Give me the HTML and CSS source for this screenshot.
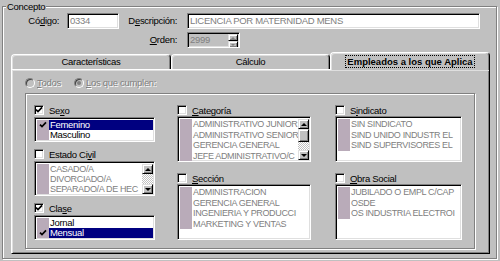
FILE: index.html
```html
<!DOCTYPE html>
<html lang="es">
<head>
    <meta charset="UTF-8">
    <title>Concepto</title>
    <link rel="stylesheet" href="styles.css">
</head>
<body>

    <fieldset class="concepto">
        <legend>Concepto</legend>

        <div class="head">
            <label class="lbl">Có<u>d</u>igo:</label>
            <div class="field">0334</div>
            <label class="lbl wide">D<u>e</u>scripción:</label>
            <div class="field">LICENCIA POR MATERNIDAD MENS</div>
            <label class="lbl wide orden-lbl"><u>O</u>rden:</label>
            <div class="spin">
                <div class="spin-text">2999</div>
                <div class="spin-btns">
                    <span class="sbtn small"><i class="arr up dim"></i></span>
                    <span class="sbtn small"><i class="arr down dim"></i></span>
                </div>
            </div>
        </div>

        <div class="tabs">
            <div class="tab">Características</div>
            <div class="tab mid">Cálculo</div>
            <div class="tab active"><span class="focus">Empleados a los que Aplica</span></div>
        </div>

        <div class="panel">
            <div class="radios">
                <div class="radio first"><span class="dot"></span><span class="dis"><u>T</u>odos</span></div>
                <div class="radio"><span class="dot on"></span><span class="dis"><u>L</u>os que cumplen:</span></div>
            </div>

            <div class="group">
                <!-- columna 1 -->
                <div class="col">
                    <div class="item-lbl"><span class="cb"><svg viewBox="0 0 8 8" width="8" height="8"><path d="M1 3.6 L3 5.6 L7 1.4" fill="none" stroke="#000" stroke-width="1.7"/></svg></span><span>Se<u>x</u>o</span></div>
                    <div class="list w1">
                        <div class="items">
                            <div class="row sel"><span class="mk"><svg viewBox="0 0 8 8" width="8" height="8"><path d="M1 3.6 L3 5.6 L7 1.4" fill="none" stroke="#000" stroke-width="1.7"/></svg></span><span class="tx">Femenino</span></div>
                            <div class="row"><span class="mk"></span><span class="tx">Masculino</span></div>
                        </div>
                    </div>

                    <div class="item-lbl gap6"><span class="cb"></span><span>Estado Ci<u>v</u>il</span></div>
                    <div class="list w1 gray caps">
                        <div class="items">
                            <div class="row"><span class="mk"></span><span class="tx">CASADO/A</span></div>
                            <div class="row"><span class="mk"></span><span class="tx">DIVORCIADO/A</span></div>
                            <div class="row"><span class="mk"></span><span class="tx">SEPARADO/A DE HEC</span></div>
                        </div>
                        <div class="sbar">
                            <span class="sbtn"><i class="arr up"></i></span>
                            <span class="track"></span>
                            <span class="sbtn"><i class="arr down"></i></span>
                        </div>
                    </div>

                    <div class="item-lbl gap6"><span class="cb"><svg viewBox="0 0 8 8" width="8" height="8"><path d="M1 3.6 L3 5.6 L7 1.4" fill="none" stroke="#000" stroke-width="1.7"/></svg></span><span>Cla<u>s</u>e</span></div>
                    <div class="list w1">
                        <div class="items">
                            <div class="row"><span class="mk"></span><span class="tx">Jornal</span></div>
                            <div class="row sel"><span class="mk"><svg viewBox="0 0 8 8" width="8" height="8"><path d="M1 3.6 L3 5.6 L7 1.4" fill="none" stroke="#000" stroke-width="1.7"/></svg></span><span class="tx">Mensual</span></div>
                        </div>
                    </div>
                </div>

                <!-- columna 2 -->
                <div class="col wide-rows">
                    <div class="item-lbl"><span class="cb"></span><span><u>C</u>ategoría</span></div>
                    <div class="list w2 top gray caps">
                        <div class="items">
                            <div class="row"><span class="mk"></span><span class="tx">ADMINISTRATIVO JUNIOR</span></div>
                            <div class="row"><span class="mk"></span><span class="tx">ADMINISTRATIVO SENIOR</span></div>
                            <div class="row"><span class="mk"></span><span class="tx">GERENCIA GENERAL</span></div>
                            <div class="row"><span class="mk"></span><span class="tx">JEFE ADMINISTRATIVO/C</span></div>
                        </div>
                        <div class="sbar">
                            <span class="sbtn"><i class="arr up"></i></span>
                            <span class="thumb"></span>
                            <span class="track"></span>
                            <span class="sbtn"><i class="arr down"></i></span>
                        </div>
                    </div>

                    <div class="item-lbl gap10"><span class="cb"></span><span><u>S</u>ección</span></div>
                    <div class="list w2 bottom gray caps">
                        <div class="items">
                            <div class="row"><span class="mk"></span><span class="tx">ADMINISTRACION</span></div>
                            <div class="row"><span class="mk"></span><span class="tx">GERENCIA GENERAL</span></div>
                            <div class="row"><span class="mk"></span><span class="tx">INGENIERIA Y PRODUCCI</span></div>
                            <div class="row"><span class="mk"></span><span class="tx">MARKETING Y VENTAS</span></div>
                        </div>
                    </div>
                </div>

                <!-- columna 3 -->
                <div class="col wide-rows">
                    <div class="item-lbl"><span class="cb"></span><span>S<u>i</u>ndicato</span></div>
                    <div class="list w3 top gray caps">
                        <div class="items">
                            <div class="row"><span class="mk"></span><span class="tx">SIN SINDICATO</span></div>
                            <div class="row"><span class="mk"></span><span class="tx">SIND UNIDO INDUSTR EL</span></div>
                            <div class="row"><span class="mk"></span><span class="tx">SIND SUPERVISORES EL</span></div>
                        </div>
                    </div>

                    <div class="item-lbl gap10"><span class="cb"></span><span><u>O</u>bra Social</span></div>
                    <div class="list w3 bottom gray caps">
                        <div class="items">
                            <div class="row"><span class="mk"></span><span class="tx">JUBILADO O EMPL C/CAP</span></div>
                            <div class="row"><span class="mk"></span><span class="tx">OSDE</span></div>
                            <div class="row"><span class="mk"></span><span class="tx">OS INDUSTRIA ELECTROI</span></div>
                        </div>
                    </div>
                </div>
            </div>
        </div>
    </fieldset>

</body>
</html>
```

FILE: styles.css
```css
* {
    box-sizing: border-box;
}

body {
    margin: 0;
    width: 500px;
    height: 261px;
    overflow: hidden;
    background: #c0c0c0;
    color: #000;
    font-family: "Liberation Sans", Arial, sans-serif;
    font-size: 9.5px;
    line-height: 11px;
    letter-spacing: -0.3px;
}

u {
    text-underline-offset: 1px;
}

/* group box "Concepto" */
.concepto {
    margin: 1px 3px 0 2px;
    padding: 1px 0 4px 0;
    min-width: 0;
    border: 1px solid #808080;
    box-shadow: 1px 1px 0 #fff, inset 1px 1px 0 #fff;
}

.concepto legend {
    margin-left: 3px;
    padding: 0 1px;
    background: #c0c0c0;
    line-height: 11px;
}

/* header fields */
.head {
    display: grid;
    grid-template-columns: 64px 52px 68px 293px;
    grid-template-rows: 16px 16px;
    row-gap: 3px;
}

.lbl {
    text-align: right;
    padding-right: 8px;
    line-height: 16px;
}

.lbl.wide {
    padding-right: 10px;
}

.orden-lbl {
    grid-column: 3;
}

.field,
.spin {
    border: 1px solid;
    border-color: #808080 #fff #fff #808080;
    box-shadow: inset 1px 1px 0 #000, inset -1px -1px 0 #dfdfdf;
    background: #fff;
    color: #808080;
    padding: 0 2px;
    line-height: 14px;
    white-space: nowrap;
    overflow: hidden;
}

.spin {
    grid-column: 4;
    width: 53px;
    display: flex;
    padding: 1px;
    background: #c0c0c0;
}

.spin-text {
    flex: 1;
    padding-left: 1px;
    line-height: 12px;
}

.spin-btns {
    width: 10px;
    display: flex;
    flex-direction: column;
}

/* tabs */
.tabs {
    position: relative;
    z-index: 1;
    display: flex;
    align-items: flex-end;
    width: 479px;
    height: 17px;
    margin: 4px 0 0 8px;
}

.tab {
    width: 160px;
    height: 15px;
    border: 1px solid #fff;
    border-right-color: #000;
    border-bottom: none;
    border-radius: 4px 4px 0 0;
    box-shadow: inset -1px 0 0 #808080, inset 1px 1px 0 #dfdfdf;
    text-align: center;
    line-height: 14px;
}

.tab.mid {
    width: 159px;
}

.tab.active {
    height: 18px;
    margin-bottom: -1px;
    background: #c0c0c0;
    font-weight: bold;
    letter-spacing: 0;
    padding-top: 2px;
}

.focus {
    display: inline-block;
    border: 1px dotted #000;
    padding: 0 1px;
    line-height: 11px;
}

/* tab page */
.panel {
    width: 479px;
    margin-left: 8px;
    border: 1px solid;
    border-color: #fff #000 #000 #fff;
    box-shadow: inset 1px 1px 0 #dfdfdf, inset -1px -1px 0 #808080;
    padding: 7px 14px 4px 13px;
}

.radios {
    display: flex;
    height: 11px;
}

.radio {
    display: flex;
    align-items: center;
    gap: 2px;
}

.radio.first {
    width: 49px;
}

.dot {
    position: relative;
    width: 10px;
    height: 10px;
    border-radius: 50%;
    border: 1px solid;
    border-color: #808080 #fff #fff #808080;
    box-shadow: inset 1px 1px 0 #404040;
    background: #c0c0c0;
}

.dot.on::after {
    content: "";
    position: absolute;
    left: 2px;
    top: 2px;
    width: 4px;
    height: 4px;
    border-radius: 50%;
    background: #808080;
}

.dis {
    color: #808080;
    text-shadow: 1px 1px 0 #fff;
}

/* inner group */
.group {
    margin-top: 5px;
    border: 1px solid #808080;
    box-shadow: 1px 1px 0 #fff, inset 1px 1px 0 #fff;
    padding: 10px 0 8px 8px;
    display: grid;
    grid-template-columns: 143px 158px 1fr;
}

.item-lbl {
    display: flex;
    align-items: center;
    gap: 5px;
    height: 12px;
}

.item-lbl.gap6 {
    margin-top: 6px;
}

.item-lbl.gap10 {
    margin-top: 10px;
}

.cb {
    width: 10px;
    height: 10px;
    flex: none;
    border: 1px solid;
    border-color: #808080 #fff #fff #808080;
    box-shadow: inset 1px 1px 0 #000, inset -1px -1px 0 #dfdfdf;
    background: #fff;
}

.cb svg,
.mk svg {
    display: block;
}

/* list boxes */
.list {
    display: flex;
    margin-top: 1px;
    border: 1px solid;
    border-color: #808080 #fff #fff #808080;
    box-shadow: inset 1px 1px 0 #000, inset -1px -1px 0 #dfdfdf;
    background: #fff;
    padding: 2px 1px 1px 2px;
}

.list.w1 {
    width: 121px;
}

.list.w2 {
    width: 134px;
}

.list.w3 {
    width: 127px;
}

.wide-rows .list {
    margin-top: 0;
}

.list.top {
    height: 46px;
}

.list.bottom {
    height: 56px;
}

.items {
    flex: 1;
    min-width: 0;
}

.row {
    display: flex;
    height: 10px;
    line-height: 10px;
    white-space: nowrap;
}

.wide-rows .row {
    height: 10.5px;
    line-height: 10.5px;
}

.mk {
    width: 12px;
    flex: none;
    background: #b9abb9;
    padding: 1px 0 0 2px;
}

.tx {
    flex: 1;
    min-width: 0;
    overflow: hidden;
    padding-left: 1px;
}

.row.sel .tx {
    background: #000080;
    color: #fff;
}

.gray .tx {
    color: #808080;
}

.caps .tx {
    font-size: 9px;
    letter-spacing: -0.35px;
}

/* scroll bars */
.sbar {
    width: 11px;
    flex: none;
    display: flex;
    flex-direction: column;
}

.track {
    flex: 1;
    background: repeating-conic-gradient(#fff 0 25%, #c0c0c0 0 50%) 0 0 / 2px 2px;
}

.sbtn,
.thumb {
    display: flex;
    align-items: center;
    justify-content: center;
    height: 10px;
    flex: none;
    background: #c0c0c0;
    border: 1px solid;
    border-color: #dfdfdf #000 #000 #dfdfdf;
    box-shadow: inset 1px 1px 0 #fff, inset -1px -1px 0 #808080;
}

.sbtn.small {
    height: 7px;
}

.thumb {
    height: 13px;
}

.arr {
    width: 0;
    height: 0;
    border-left: 3px solid transparent;
    border-right: 3px solid transparent;
}

.arr.up {
    border-bottom: 3px solid #000;
}

.arr.down {
    border-top: 3px solid #000;
}

.arr.up.dim {
    border-bottom-color: #808080;
    border-left-width: 2px;
    border-right-width: 2px;
    border-bottom-width: 2px;
}

.arr.down.dim {
    border-top-color: #808080;
    border-left-width: 2px;
    border-right-width: 2px;
    border-top-width: 2px;
}
```
